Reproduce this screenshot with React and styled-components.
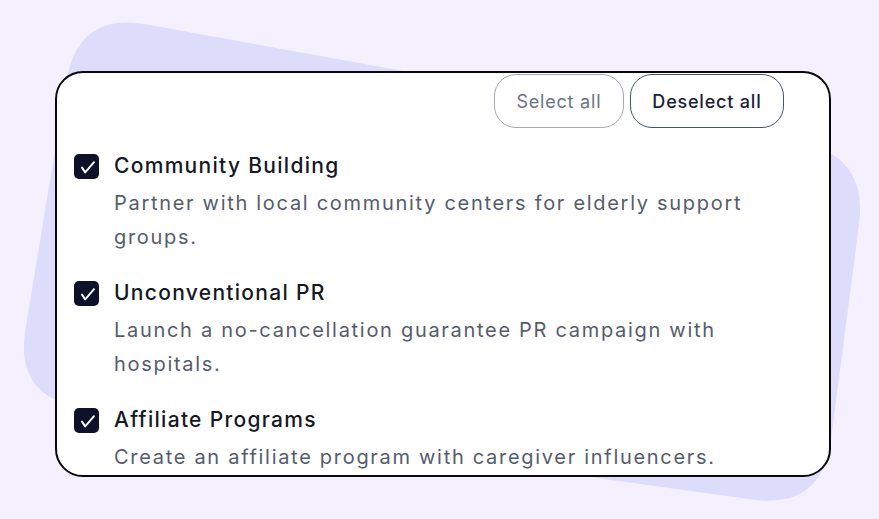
import React from 'react';
import styled, { createGlobalStyle } from 'styled-components';

const Global = createGlobalStyle`
  html, body {
    margin: 0;
    padding: 0;
    background: #f5f0fe;
  }
  body {
    font-family: Inter, "Noto Sans", sans-serif;
    -webkit-font-smoothing: antialiased;
  }
`;

const Page = styled.div`
  position: relative;
  width: 879px;
  height: 519px;
  overflow: hidden;
  padding: 71px 0 0 55px;
  box-sizing: border-box;
`;

const Blob = styled.svg`
  position: absolute;
  left: 0;
  top: 0;
  width: 879px;
  height: 519px;
`;

const Card = styled.div`
  position: relative;
  width: 776px;
  height: 406px;
  box-sizing: border-box;
  background: #ffffff;
  border: 2px solid #0a0a0a;
  border-radius: 28px;
  overflow: hidden;
  padding: 1px 45px 0 17px;
`;

const Toolbar = styled.div`
  display: flex;
  justify-content: flex-end;
  gap: 6px;
`;

const Pill = styled.button`
  height: 54px;
  padding: 0 21.5px;
  border-radius: 22px;
  background: #fff;
  font-family: inherit;
  font-size: 18px;
  letter-spacing: 0.8px;
  cursor: pointer;
  border: 1px solid ${p => (p.$primary ? '#475569' : '#a3a9b8')};
  color: ${p => (p.$primary ? '#1a2236' : '#6b7385')};
  font-weight: ${p => (p.$primary ? 500 : 400)};
`;

const List = styled.div`
  display: flex;
  flex-direction: column;
  gap: 26px;
  margin-top: 25px;
`;

const Item = styled.label`
  display: grid;
  grid-template-columns: 25px 1fr;
  column-gap: 15px;
  align-items: start;
`;

const Box = styled.span`
  width: 25px;
  height: 25px;
  border-radius: 5px;
  background: #0d1229;
  display: block;
  margin-top: 1px;
`;

const Title = styled.div`
  font-size: 21px;
  font-weight: 500;
  letter-spacing: 1.3px;
  color: #141824;
  line-height: 26px;
`;

const Desc = styled.div`
  grid-column: 2;
  font-size: 20px;
  letter-spacing: 1.7px;
  color: #555c6b;
  line-height: 34px;
  margin-top: 7px;
`;

const items = [
  {
    title: 'Community Building',
    desc: 'Partner with local community centers for elderly support groups.',
  },
  {
    title: 'Unconventional PR',
    desc: 'Launch a no-cancellation guarantee PR campaign with hospitals.',
  },
  {
    title: 'Affiliate Programs',
    desc: 'Create an affiliate program with caregiver influencers.',
  },
];

const Check = () => (
  <svg width="25" height="25" viewBox="0 0 25 25" fill="none">
    <path d="M8 13.6 L11.2 18.4 L20 8.2" stroke="#fff" strokeWidth="1.9" strokeLinecap="round" strokeLinejoin="round" />
  </svg>
);

export default function App() {
  return (
    <Page>
      <Global />
      <Blob viewBox="0 0 879 519">
        <path
          fill="#dedcfb"
          d="M146.9 24.5 L799.1 142.5 Q868 155 859 224.4 L831 439.6 Q822 509 752.6 499.5 L83.4 407.5 Q14 398 25.5 328.9 L66.5 81 Q78 12 146.9 24.5 Z"
        />
      </Blob>
      <Card>
        <Toolbar>
          <Pill>Select all</Pill>
          <Pill $primary>Deselect all</Pill>
        </Toolbar>
        <List>
          {items.map(it => (
            <Item key={it.title}>
              <Box><Check /></Box>
              <Title>{it.title}</Title>
              <Desc>{it.desc}</Desc>
            </Item>
          ))}
        </List>
      </Card>
    </Page>
  );
}
